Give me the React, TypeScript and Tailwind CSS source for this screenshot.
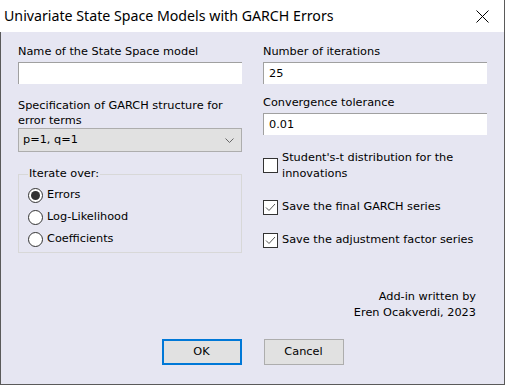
import React from 'react'

const body = { fontFamily: '"DejaVu Sans", Verdana, sans-serif' }

function TextBox({ value }: { value: string }) {
  return (
    <div className="mt-[2px] h-[22px] w-[224px] bg-white border-t border-l border-t-[#a0a0a0] border-l-[#a0a0a0] pl-[5px] text-[11.3px] leading-[21px] text-black">
      {value}
    </div>
  )
}

function CheckBox({ checked }: { checked: boolean }) {
  return (
    <div className="w-[15px] h-[15px] shrink-0 bg-white border border-[#333333] flex items-center justify-center">
      {checked && (
        <svg width="11" height="9" viewBox="0 0 11 9">
          <path d="M1 4.5 L4 7.5 L10 1" fill="none" stroke="#555" strokeWidth="1" />
        </svg>
      )}
    </div>
  )
}

function Radio({ checked, label }: { checked: boolean; label: string }) {
  return (
    <div className="flex items-center h-[22px]">
      <div className="w-[15px] h-[15px] rounded-full bg-white border border-[#333333] flex items-center justify-center">
        {checked && <div className="w-[9px] h-[9px] rounded-full bg-[#333333]" />}
      </div>
      <span className="ml-[4px] text-[11.3px]">{label}</span>
    </div>
  )
}

export default function App() {
  return (
    <div className="w-[505px] h-[386px] bg-white">
      <div className="w-[505px] h-[385px] border-r border-b border-[#5a5a5a] flex flex-col">
        <div className="h-[32px] shrink-0 bg-white flex items-center justify-between pl-[4px] pr-[15px]">
          <span className="text-[14.2px] text-black" style={{ fontFamily: '"Noto Sans", "Open Sans", sans-serif' }}>
            Univariate State Space Models with GARCH Errors
          </span>
          <svg width="13" height="13" viewBox="0 0 13 13">
            <path d="M0.5 0.5 L12.5 12.5 M12.5 0.5 L0.5 12.5" stroke="#000" strokeWidth="1" />
          </svg>
        </div>
        <div className="flex-1 bg-[#e6e6f2] border-l border-[#5a5a5a] flex flex-col text-black" style={body}>
          <div className="flex pl-[17px] pt-[12px] gap-[21px]">
            <div className="w-[224px] flex flex-col">
              <div className="text-[11.3px] leading-[16px]">Name of the State Space model</div>
              <TextBox value="" />
              <div className="mt-[14px] text-[11.3px] leading-[15px]">
                Specification of GARCH structure for
                <br />
                error terms
              </div>
              <div className="h-[24px] w-[224px] bg-[#e1e1e1] border border-[#adadad] flex items-center justify-between pl-[4px] pr-[7px] text-[11.3px]">
                <span>p=1, q=1</span>
                <svg width="9" height="5" viewBox="0 0 9 5">
                  <path d="M0.5 0.5 L4.5 4.5 L8.5 0.5" fill="none" stroke="#666" strokeWidth="1" />
                </svg>
              </div>
              <fieldset className="mt-[15px] h-[86px] border border-[#d8d8d8] pl-[9px] pr-[8px] pt-[3px]">
                <legend className="px-[1px] text-[11.3px] leading-[14px]">Iterate over:</legend>
                <Radio checked label="Errors" />
                <Radio checked={false} label="Log-Likelihood" />
                <Radio checked={false} label="Coefficients" />
              </fieldset>
            </div>
            <div className="w-[224px] flex flex-col">
              <div className="text-[11.3px] leading-[16px]">Number of iterations</div>
              <TextBox value="25" />
              <div className="mt-[11px] text-[11.3px] leading-[16px]">Convergence tolerance</div>
              <TextBox value="0.01" />
              <div className="mt-[15px] flex items-start">
                <div className="mt-[8px]">
                  <CheckBox checked={false} />
                </div>
                <div className="ml-[4px] text-[11.3px] leading-[16px]">
                  Student's-t distribution for the
                  <br />
                  innovations
                </div>
              </div>
              <div className="mt-[17px] flex items-center">
                <CheckBox checked />
                <span className="ml-[4px] text-[11.3px]">Save the final GARCH series</span>
              </div>
              <div className="mt-[16px] flex items-center">
                <CheckBox checked />
                <span className="ml-[4px] text-[11.3px]">Save the adjustment factor series</span>
              </div>
            </div>
          </div>
          <div className="mt-[36px] pr-[28px] flex justify-end">
            <div className="text-[11.3px] leading-[16px] text-right">
              Add-in written by
              <br />
              Eren Ocakverdi, 2023
            </div>
          </div>
          <div className="mt-[18px] flex justify-center gap-[22px]">
            <button className="w-[80px] h-[26px] bg-[#e1e1e1] border-2 border-[#0078d7] text-[11.3px]">OK</button>
            <button className="w-[80px] h-[26px] bg-[#e1e1e1] border border-[#adadad] text-[11.3px]">Cancel</button>
          </div>
        </div>
      </div>
    </div>
  )
}
